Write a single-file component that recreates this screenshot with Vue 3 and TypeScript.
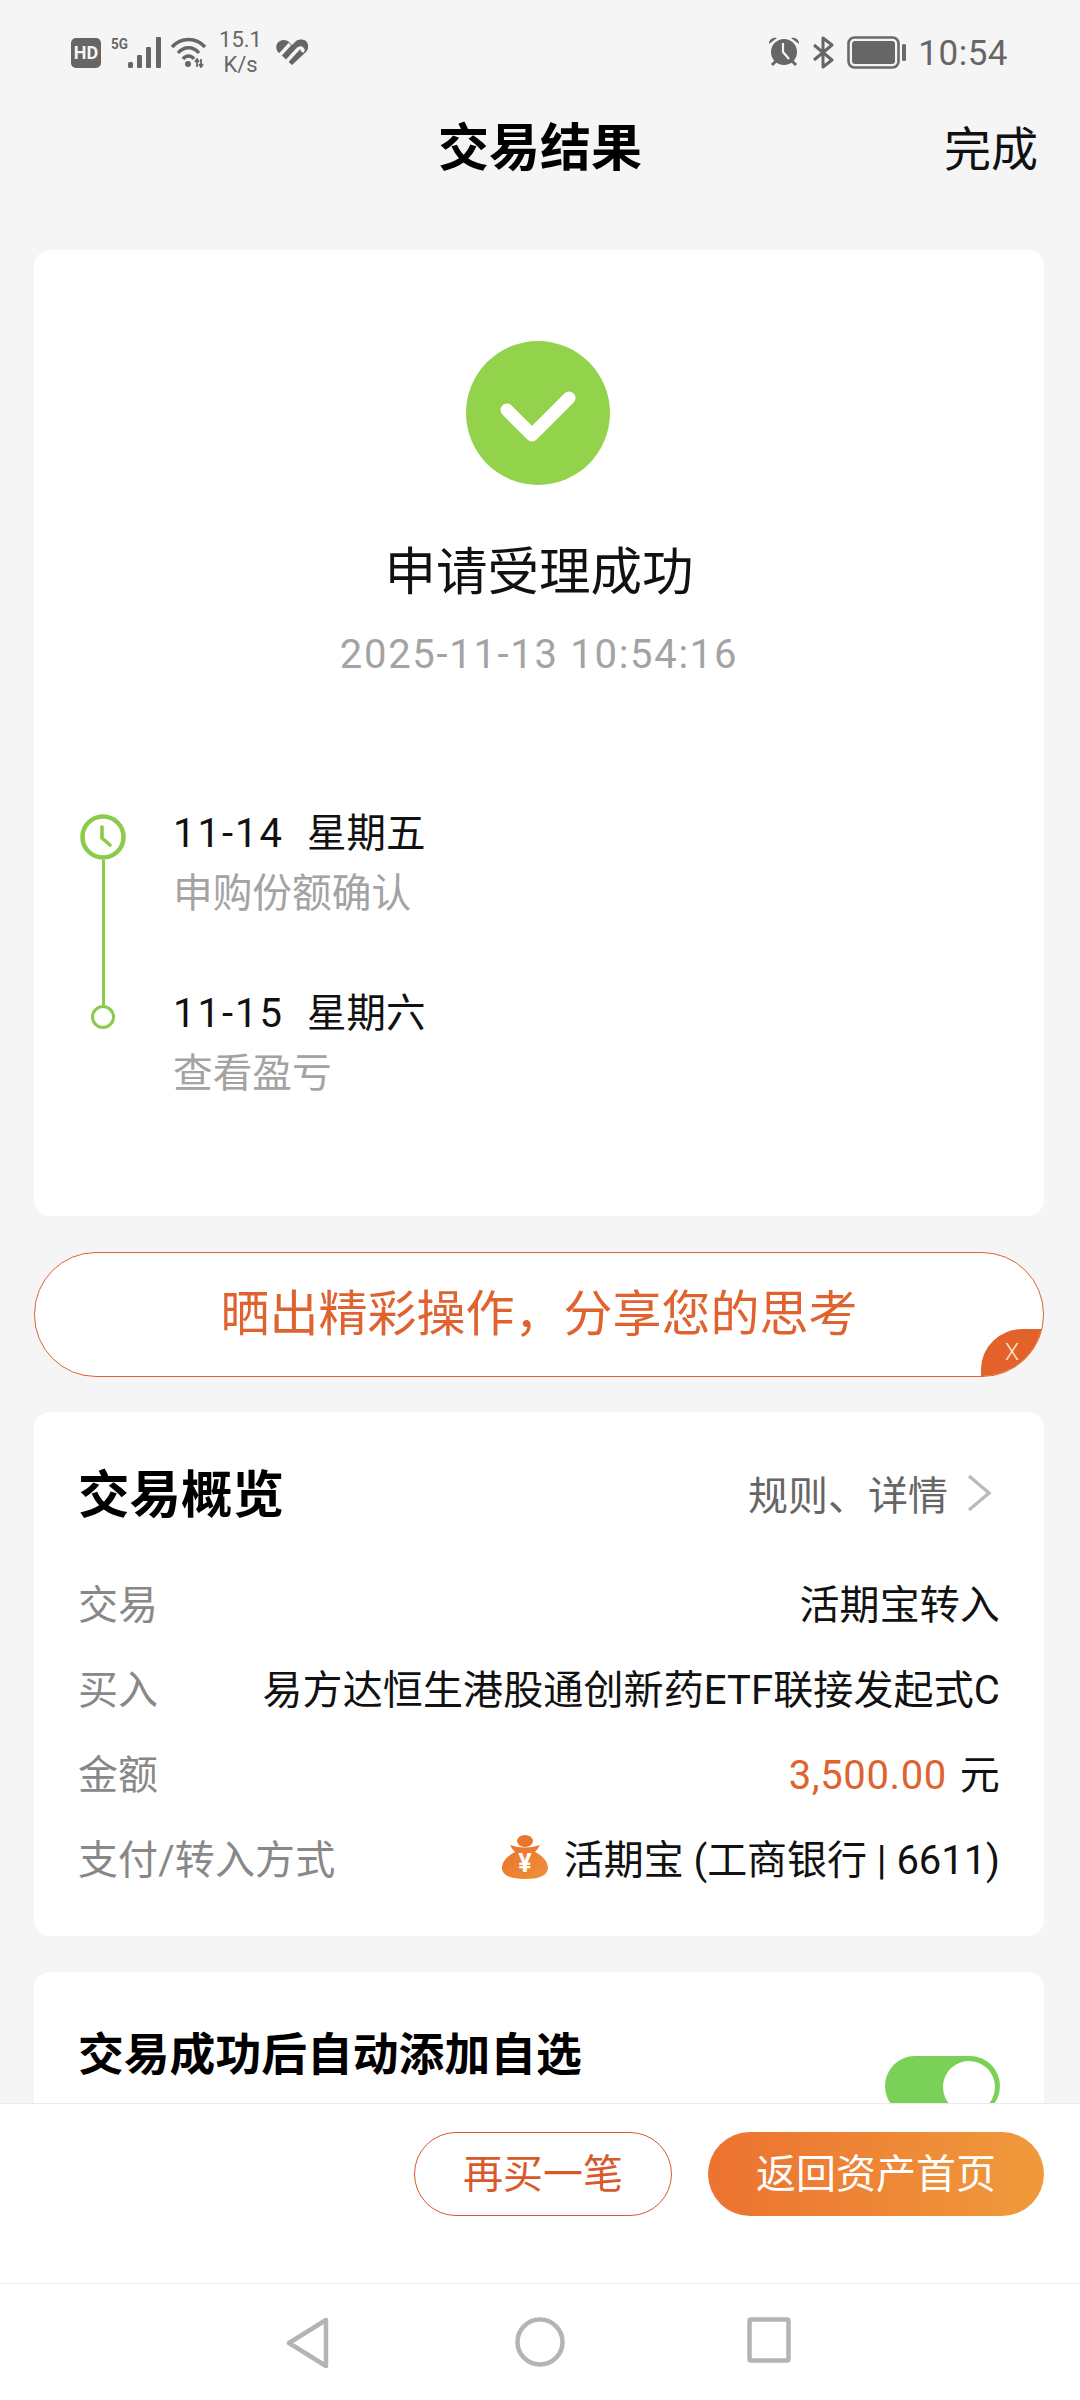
<script setup lang="ts">
interface Step {
  day: string
  week: string
  note: string
}

interface Row {
  label: string
  value: string
}

const steps: Step[] = [
  { day: '11-14', week: '星期五', note: '申购份额确认' },
  { day: '11-15', week: '星期六', note: '查看盈亏' },
]

const rows: Row[] = [
  { label: '交易', value: '活期宝转入' },
  { label: '买入', value: '易方达恒生港股通创新药ETF联接发起式C' },
]
</script>

<template>
  <div class="page">
    <div class="status">
      <div class="status-left">
        <span class="hd">HD</span>
        <svg width="51" height="32" viewBox="0 0 51 32" fill="#666">
          <text x="0" y="13" font-size="15" font-weight="700" font-family="Roboto, sans-serif" textLength="17" lengthAdjust="spacingAndGlyphs">5G</text>
          <rect x="17" y="26" width="5" height="6" rx="1.5" />
          <rect x="26" y="19" width="5" height="13" rx="1" />
          <rect x="35" y="11" width="5" height="21" rx="1" />
          <rect x="45" y="1" width="5" height="31" rx="1" />
        </svg>
        <svg class="wifi" width="37" height="32" viewBox="0 0 37 32" fill="none" stroke="#666" stroke-width="3.4">
          <path d="M2 11C11 1 26 1 35 11" />
          <path d="M8 17C14 10 23 10 29 17" />
          <path d="M13 23C16 19 21 19 24 23" />
          <circle cx="18" cy="28" r="3" fill="#666" stroke="none" />
          <path d="M27 31v-8M31 23v8M25 26l2-3 2 3M29 28l2 3 2-3" stroke-width="1.8" />
        </svg>
        <div class="speed">
          <span>15.1</span>
          <span>K/s</span>
        </div>
        <svg class="heart" width="32" height="26" viewBox="0 0 32 26" fill="none">
          <path d="M16 26L2 13C-1 9 0 4 4 2c3-2 7-1 9 1l3 3 4-4c3-2 7-2 10 0 3 3 3 8 0 11z" fill="#666" />
          <path d="M3 17L14 5M11 22L22 10c2-2 4-1 5 1l-1 2" stroke="#f5f5f5" stroke-width="3.4" />
        </svg>
      </div>
      <div class="status-right">
        <svg width="32" height="31" viewBox="0 0 32 31">
          <path d="M1 8C1 3 5 1 9 2zM31 8c0-5-4-7-8-6z" fill="#666" />
          <path d="M8 25l-4 4M24 25l4 4" stroke="#666" stroke-width="3" />
          <circle cx="16" cy="16" r="13" fill="#666" />
          <path d="M15 7v9l6 7" fill="none" stroke="#f5f5f5" stroke-width="2.2" />
        </svg>
        <svg width="23" height="33" viewBox="0 0 23 33" fill="none" stroke="#666" stroke-width="3" stroke-linejoin="round">
          <path d="M2 9l18 15-9 7V2l9 7L2 24" />
        </svg>
        <svg width="59" height="33" viewBox="0 0 59 33">
          <rect x="1.5" y="1.5" width="50" height="30" rx="6" fill="none" stroke="#6a6a6a" stroke-width="2.6" />
          <rect x="5" y="5" width="43" height="23" rx="3" fill="#666" />
          <rect x="55" y="8" width="4" height="17" rx="1.5" fill="#6a6a6a" />
        </svg>
        <span class="clock">10:54</span>
      </div>
    </div>

    <header class="topbar">
      <h1>交易结果</h1>
      <span class="done">完成</span>
    </header>

    <main class="content">
      <section class="card result">
        <svg class="tick" width="146" height="144" viewBox="0 0 146 144">
          <circle cx="73" cy="72" r="72" fill="#93d34c" />
          <path d="M42 69L67 94L104 57" fill="none" stroke="#fff" stroke-width="13" stroke-linecap="round" stroke-linejoin="round" />
        </svg>
        <div class="result-title">申请受理成功</div>
        <div class="result-time">2025-11-13 10:54:16</div>

        <div class="steps">
          <div v-for="(step, i) in steps" :key="step.day" class="step" :class="{ last: i === steps.length - 1 }">
            <div class="rail">
              <template v-if="i === 0">
                <svg class="rail-clock" width="46" height="46" viewBox="0 0 46 46" fill="none" stroke="#8bcb4a">
                  <circle cx="23" cy="23" r="20.5" stroke-width="4.5" />
                  <path d="M22 13v11l8 7" stroke-width="3.6" stroke-linecap="round" stroke-linejoin="round" />
                </svg>
                <i class="rail-line" />
              </template>
              <template v-else>
                <i class="rail-line short" />
                <i class="rail-dot" />
              </template>
            </div>
            <div class="step-text">
              <div class="step-date">
                <span class="step-day">{{ step.day }}</span>
                <span>{{ step.week }}</span>
              </div>
              <div class="step-note">{{ step.note }}</div>
            </div>
          </div>
        </div>
      </section>

      <section class="banner">
        <span>晒出精彩操作，分享您的思考</span>
        <div class="banner-close">X</div>
      </section>

      <section class="card overview">
        <div class="overview-head">
          <h2>交易概览</h2>
          <div class="rules">
            <span>规则、详情</span>
            <svg width="26" height="38" viewBox="0 0 26 38" fill="none" stroke="#bbb" stroke-width="3.4">
              <path d="M3 2L23 19L3 36" />
            </svg>
          </div>
        </div>
        <div class="rows">
          <div v-for="row in rows" :key="row.label" class="row">
            <span class="row-label">{{ row.label }}</span>
            <span>{{ row.value }}</span>
          </div>
          <div class="row">
            <span class="row-label">金额</span>
            <span><span class="amount">3,500.00</span> 元</span>
          </div>
          <div class="row">
            <span class="row-label">支付/转入方式</span>
            <span class="pay">
              <svg width="46" height="44" viewBox="0 0 46 44">
                <defs>
                  <linearGradient id="bag" x1="0" y1="0" x2="1" y2="1">
                    <stop offset="0" stop-color="#e9702a" />
                    <stop offset="1" stop-color="#f0923a" />
                  </linearGradient>
                </defs>
                <ellipse cx="23" cy="6" rx="8" ry="6" fill="#ea752c" />
                <path d="M8 10Q23 15 38 10Q36 14 33 17C41 21 46 27 46 33C46 41 36 44 23 44C10 44 0 41 0 33C0 27 5 21 13 17Q10 14 8 10z" fill="url(#bag)" />
                <text x="23" y="37" text-anchor="middle" font-size="25" font-weight="700" fill="#fff" font-family="Roboto, sans-serif">¥</text>
              </svg>
              <span>活期宝 (工商银行 | 6611)</span>
            </span>
          </div>
        </div>
      </section>

      <section class="card auto">
        <h3>交易成功后自动添加自选</h3>
        <div class="toggle"><i /></div>
      </section>
    </main>

    <footer class="actions">
      <button class="btn ghost">再买一笔</button>
      <button class="btn solid">返回资产首页</button>
    </footer>

    <nav class="nav">
      <svg width="44" height="52" viewBox="0 0 44 52" fill="none" stroke="#b4b4b4" stroke-width="4.5" stroke-linejoin="round">
        <path d="M40 3V49L3 26z" />
      </svg>
      <svg width="50" height="50" viewBox="0 0 50 50" fill="none" stroke="#b4b4b4" stroke-width="4.5">
        <circle cx="25" cy="25" r="22.5" />
      </svg>
      <svg class="nav-square" width="44" height="46" viewBox="0 0 44 46" fill="none" stroke="#b4b4b4" stroke-width="4.5" stroke-linejoin="round">
        <rect x="2.5" y="2.5" width="39" height="41" rx="1.5" />
      </svg>
    </nav>
  </div>
</template>

<style scoped>
.page {
  width: 1080px;
  height: 2400px;
  display: flex;
  flex-direction: column;
  overflow: hidden;
  background: #f5f5f5;
  color: #111;
  font-family: Roboto, "Noto Sans CJK SC", sans-serif;
}

h1, h2, h3 {
  margin: 0;
  font-weight: 700;
}

.status {
  height: 100px;
  flex: none;
  display: flex;
  justify-content: space-between;
  align-items: flex-start;
  padding: 30px 72px 0 71px;
  box-sizing: border-box;
  color: #666;
}

.status-left,
.status-right {
  display: flex;
  align-items: flex-start;
}

.status-left svg,
.status-right svg {
  flex: none;
  margin-top: 6px;
}

.hd {
  width: 30px;
  height: 30px;
  margin: 8px 10px 0 0;
  border-radius: 5px;
  background: #666;
  color: #f5f5f5;
  font-size: 18px;
  font-weight: 700;
  line-height: 30px;
  text-align: center;
}

.status-left .wifi {
  margin-left: 8px;
}

.speed {
  width: 43px;
  margin: -3px 14px 0 12px;
  display: flex;
  flex-direction: column;
  align-items: center;
  font-size: 22px;
  line-height: 25px;
  white-space: nowrap;
}

.status-left .heart {
  margin-top: 9px;
}

.status-right svg + svg {
  margin-left: 12px;
}

.clock {
  margin: 4px 0 0 12px;
  font-size: 35px;
  line-height: 40px;
  letter-spacing: 0.5px;
}

.topbar {
  height: 96px;
  flex: none;
  position: relative;
  display: flex;
  justify-content: center;
  align-items: center;
}

.topbar h1 {
  margin-bottom: 8px;
  font-size: 51px;
  color: #000;
}

.done {
  position: absolute;
  right: 42px;
  top: 20px;
  font-size: 47px;
  line-height: 60px;
}

.content {
  flex: 1;
  min-height: 0;
  overflow: hidden;
  padding: 54px 36px 0 34px;
  display: flex;
  flex-direction: column;
  gap: 36px;
}

.card {
  flex: none;
  background: #fff;
  border-radius: 16px;
}

.result {
  padding: 91px 0 120px;
  display: flex;
  flex-direction: column;
  align-items: center;
}

.tick {
  margin-left: -2px;
}

.result-title {
  margin-top: 53px;
  font-size: 51.5px;
  line-height: 70px;
}

.result-time {
  margin-top: 22px;
  font-size: 40px;
  line-height: 50px;
  color: #a3a3a3;
  letter-spacing: 1.7px;
}

.steps {
  align-self: stretch;
  margin-top: 132px;
  padding-left: 46px;
}

.step {
  display: flex;
  gap: 47px;
}

.rail {
  width: 46px;
  flex: none;
  display: flex;
  flex-direction: column;
  align-items: center;
}

.rail-clock {
  margin-top: 2px;
  flex: none;
}

.rail-line {
  flex: 1;
  width: 3px;
  background: #8bcb4a;
}

.rail-line.short {
  flex: none;
  height: 13px;
}

.rail-dot {
  width: 24px;
  height: 24px;
  box-sizing: border-box;
  border: 3.5px solid #8bcb4a;
  border-radius: 50%;
}

.step-text {
  padding-bottom: 76px;
}

.step.last .step-text {
  padding-bottom: 0;
}

.step-date {
  display: flex;
  gap: 23px;
  font-size: 39.5px;
  line-height: 44px;
}

.step-day {
  font-size: 40px;
  letter-spacing: 2px;
}

.step-note {
  margin-top: 16px;
  font-size: 39.7px;
  line-height: 44px;
  color: #a3a3a3;
}

.banner {
  flex: none;
  height: 125px;
  margin-bottom: -1px;
  padding-bottom: 10px;
  box-sizing: border-box;
  position: relative;
  overflow: hidden;
  display: flex;
  justify-content: center;
  align-items: center;
  background: #fff;
  border: 1.6px solid #e0622f;
  border-radius: 62px;
  color: #e0622f;
  font-size: 49px;
}

.banner-close {
  position: absolute;
  right: 0;
  bottom: 0;
  width: 62px;
  height: 47px;
  background: #e2622a;
  border-top-left-radius: 42px 40px;
  color: #ffe9cc;
  font-size: 23px;
  line-height: 47px;
  text-align: center;
  font-weight: 300;
}

.overview {
  padding: 46px 44px 49px;
}

.overview-head {
  display: flex;
  justify-content: space-between;
  align-items: center;
  height: 70px;
}

.overview-head h2 {
  margin-bottom: 6px;
  font-size: 51.5px;
  color: #000;
}

.rules {
  display: flex;
  align-items: center;
  gap: 18px;
  margin-right: 8px;
  font-size: 40px;
  color: #666;
}

.rows {
  margin-top: 44px;
  display: flex;
  flex-direction: column;
  gap: 25px;
}

.row {
  display: flex;
  justify-content: space-between;
  align-items: center;
  height: 60px;
  font-size: 40px;
  letter-spacing: 0.12px;
  white-space: nowrap;
}

.row-label {
  color: #888;
}

.amount {
  margin-right: 3px;
  color: #e0622f;
  letter-spacing: 0.6px;
}

.pay {
  display: flex;
  align-items: center;
  gap: 16px;
  letter-spacing: -0.05px;
}

.auto {
  position: relative;
  height: 200px;
  padding: 52px 44px 0;
  display: flex;
  justify-content: space-between;
  align-items: flex-start;
}

.auto h3 {
  font-size: 45.8px;
  line-height: 64px;
  color: #000;
}

.toggle {
  width: 115px;
  height: 60px;
  margin-top: 32px;
  padding: 5px;
  box-sizing: border-box;
  display: flex;
  justify-content: flex-end;
  border-radius: 30px;
  background: #7bd157;
}

.toggle i {
  width: 52px;
  height: 52px;
  border-radius: 50%;
  background: #fff;
}

.actions {
  height: 180px;
  flex: none;
  box-sizing: border-box;
  display: flex;
  justify-content: flex-end;
  align-items: flex-start;
  gap: 36px;
  padding: 28px 36px 0 0;
  background: #fff;
  border-top: 1px solid #ebebeb;
}

.btn {
  height: 84px;
  border-radius: 42px;
  font-family: inherit;
  font-size: 40px;
  padding: 0 0 6px;
}

.ghost {
  width: 258px;
  background: #fff;
  border: 1.5px solid #d9582c;
  color: #d9582c;
}

.solid {
  width: 336px;
  border: 0;
  background: linear-gradient(90deg, #ec7230, #f09a3c);
  color: #fff;
}

.nav {
  height: 117px;
  flex: none;
  box-sizing: border-box;
  display: flex;
  justify-content: center;
  align-items: flex-start;
  gap: 185px;
  padding: 33px 3px 0 0;
  background: #fff;
  border-top: 1px solid #ededed;
}

.nav-square {
  margin-left: -3px;
}
</style>
